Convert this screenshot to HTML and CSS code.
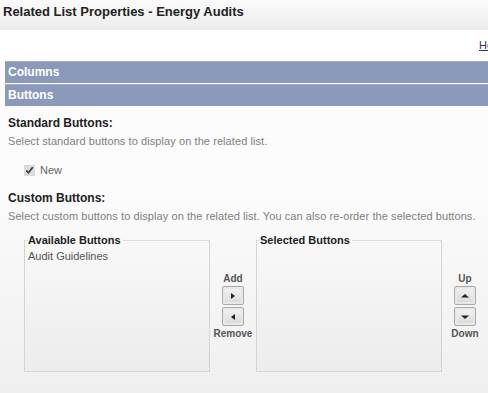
FILE: index.html
```html
<!DOCTYPE html>
<html lang="en">
<head>
  <meta charset="UTF-8">
  <title>Related List Properties - Energy Audits</title>
  <link rel="stylesheet" href="styles.css">
</head>
<body>

<div class="page-title">Related List Properties - Energy Audits</div>

<div class="help-row">
  <a href="#">Help for this Page</a>
</div>

<div class="section-bar">Columns</div>
<div class="section-bar">Buttons</div>

<div class="content">
  <h3>Standard Buttons:</h3>
  <p class="hint">Select standard buttons to display on the related list.</p>
  <label class="check">
    <input type="checkbox" checked>
    New
  </label>

  <h3>Custom Buttons:</h3>
  <p class="hint">Select custom buttons to display on the related list. You can also re-order the selected buttons.</p>

  <div class="picker">
    <fieldset class="box">
      <legend>Available Buttons</legend>
      <ul class="options">
        <li>Audit Guidelines</li>
      </ul>
    </fieldset>

    <div class="arrows">
      <span>Add</span>
      <button class="arrow-btn" title="Add">
        <svg width="8" height="8" viewBox="0 0 8 8"><path d="M2 1 L6 4 L2 7 Z" fill="#222"/></svg>
      </button>
      <button class="arrow-btn" title="Remove">
        <svg width="8" height="8" viewBox="0 0 8 8"><path d="M6 1 L2 4 L6 7 Z" fill="#222"/></svg>
      </button>
      <span>Remove</span>
    </div>

    <fieldset class="box">
      <legend>Selected Buttons</legend>
      <ul class="options"></ul>
    </fieldset>

    <div class="arrows">
      <span>Up</span>
      <button class="arrow-btn" title="Up">
        <svg width="10" height="8" viewBox="0 0 10 8"><path d="M1 5.5 L5 2 L9 5.5 Z" fill="#222"/></svg>
      </button>
      <button class="arrow-btn" title="Down">
        <svg width="10" height="8" viewBox="0 0 10 8"><path d="M1 2.5 L5 6 L9 2.5 Z" fill="#222"/></svg>
      </button>
      <span>Down</span>
    </div>
  </div>
</div>

</body>
</html>
```

FILE: styles.css
```css
body {
  margin: 0;
  font-family: "Liberation Sans", Arial, sans-serif;
  color: #333;
  background: linear-gradient(#fdfdfd 0px, #fbfbfb 200px, #efefef 393px);
  overflow: hidden;
  height: 393px;
}
.page-title {
  height: 30px;
  line-height: 24px;
  padding-left: 3px;
  font-size: 13px;
  font-weight: bold;
  color: #222;
  background: linear-gradient(#fbfbfb, #ececec);
  white-space: nowrap;
}
.help-row {
  height: 31px;
  padding-left: 479px;
  line-height: 31px;
  font-size: 11px;
  white-space: nowrap;
  background: #fff;
}
.help-row a {
  color: #333366;
}
.section-bar {
  margin-left: 5px;
  margin-bottom: 1px;
  height: 21px;
  line-height: 21px;
  padding-left: 3px;
  background: #8b9aba;
  border-top: 1px solid #9eabc6;
  color: #fff;
  font-size: 12px;
  font-weight: bold;
}
.content {
  padding-left: 8px;
}
.content h3 {
  margin: 0;
  font-size: 12px;
  font-weight: bold;
  color: #222;
}
.content h3:first-child {
  margin-top: 10px;
}
.hint {
  margin: 5px 0 0;
  font-size: 11px;
  letter-spacing: 0.08px;
  color: #808080;
}
.check {
  display: flex;
  align-items: center;
  gap: 5px;
  margin: 17px 0 15px 16px;
  font-size: 11px;
  color: #666;
}
.check input {
  margin: 0;
  width: 11px;
  height: 11px;
  accent-color: #dcdcdc;
}
.picker {
  display: flex;
  align-items: flex-start;
  margin-top: 12px;
  margin-left: 16px;
}
.box {
  margin: 0;
  padding: 0 3px;
  width: 181px;
  height: 136px;
  border: 1px solid #d4d4d4;
  border-top-color: #ddd;
  background: linear-gradient(#f8f8f8, #ececec);
}
.box legend {
  padding: 0 2px 0 0;
  font-size: 11px;
  font-weight: bold;
  color: #222;
}
.options {
  list-style: none;
  margin: 4px 0 0;
  padding: 0;
  font-size: 11px;
  color: #555;
}
.arrows {
  width: 47px;
  display: flex;
  flex-direction: column;
  align-items: center;
  gap: 2px;
  padding-top: 39px;
  font-size: 10px;
  font-weight: bold;
  color: #555;
}
.arrows span {
  line-height: 11px;
}
.arrow-btn {
  box-sizing: border-box;
  width: 22px;
  height: 19px;
  padding: 0;
  display: flex;
  align-items: center;
  justify-content: center;
  border: 1px solid #aaa;
  border-radius: 2px;
  background: linear-gradient(#f4f4f4, #d8d8d8);
  box-shadow: inset 0 0 0 2px #e8e8e8;
}
```
